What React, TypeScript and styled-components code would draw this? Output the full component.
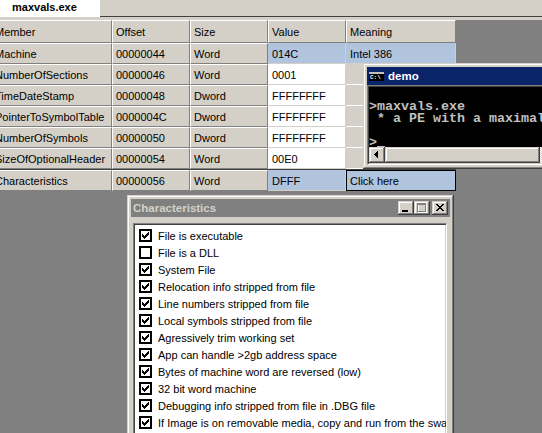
import React from 'react';
import styled, { createGlobalStyle, css } from 'styled-components';

const GlobalStyle = createGlobalStyle`
  html, body { margin: 0; padding: 0; background: #808080; overflow: hidden; }
  #root { width: 542px; height: 433px; }
`;

const UI = `"Liberation Sans", Arial, sans-serif`;
const MONO = `"Liberation Mono", "DejaVu Sans Mono", monospace`;

const Screen = styled.div`
  position: relative;
  width: 542px;
  height: 433px;
  overflow: hidden;
  background: #808080;
  display: flex;
  flex-direction: column;
  font-family: ${UI};
  font-size: 11px;
  color: #000;
`;

const TabBar = styled.div`
  height: 17px;
  flex: none;
  display: flex;
  background: #d4d0c8;
`;

const Tab = styled.div`
  width: 100px;
  background: #fff;
  font-weight: bold;
  padding-left: 12px;
  box-sizing: border-box;
  line-height: 15px;
`;

const TabRest = styled.div`
  flex: 1;
  border-bottom: 1px solid #404040;
`;

const Strip = styled.div`
  height: 3px;
  flex: none;
  background: #d4d0c8;
`;

const Workspace = styled.div`
  flex: 1;
  background: #808080;
`;

const GridClip = styled.div`
  width: 456px;
  overflow: hidden;
`;

const GridInner = styled.div`
  margin-left: -9px;
  display: flex;
  flex-direction: column;
`;

const Row = styled.div<{ $h: number; $sep?: boolean }>`
  display: grid;
  grid-template-columns: 121px 78px 78px 78px 110px;
  height: ${(p) => p.$h}px;
  ${(p) =>
    p.$sep &&
    css`
      border-top: 1px solid #404040;
    `}
`;

type Tone = 'raised' | 'white' | 'blue' | 'meaning' | 'edit';

const toneStyles: Record<Tone, ReturnType<typeof css>> = {
  raised: css`
    background: #d4d0c8;
    border-top: 1px solid #fff;
    border-left: 1px solid #fff;
    border-right: 1px solid #808080;
    border-bottom: 1px solid #808080;
  `,
  white: css`
    background: #fff;
    border-top: 1px solid #fff;
    border-left: 1px solid #fff;
    border-right: 1px solid #d4d0c8;
    border-bottom: 1px solid #d4d0c8;
  `,
  blue: css`
    background: #b0c4de;
    border-top: 1px solid #b0c4de;
    border-left: 1px solid #b0c4de;
    border-right: 1px solid #d4d0c8;
    border-bottom: 1px solid #d4d0c8;
  `,
  meaning: css`
    background: #d4d0c8;
    border-top: 1px solid #d4d0c8;
    border-left: 1px solid #d4d0c8;
    border-right: 1px solid #fff;
    border-bottom: 1px solid #fff;
  `,
  edit: css`
    background: #b0c4de;
    border: 1px solid #000;
  `,
};

const Cell = styled.div<{ $tone: Tone }>`
  box-sizing: border-box;
  display: flex;
  align-items: center;
  padding-left: 3px;
  white-space: nowrap;
  overflow: hidden;
  ${(p) => toneStyles[p.$tone]}
`;

/* ---------- windows ---------- */

const frame = css`
  position: absolute;
  box-sizing: border-box;
  background: #d4d0c8;
  padding: 4px;
  display: flex;
  flex-direction: column;
  box-shadow: inset -1px -1px #404040, inset 1px 1px #d4d0c8, inset -2px -2px #808080, inset 2px 2px #fff;
`;

const ConsoleWindow = styled.div`
  ${frame}
  left: 363px;
  top: 63px;
  width: 640px;
  height: 106px;
  z-index: 2;
`;

const TitleBar = styled.div<{ $active?: boolean }>`
  height: 18px;
  flex: none;
  display: flex;
  align-items: center;
  gap: 4px;
  padding: 0 2px 0 2px;
  font-weight: bold;
  font-size: 11.5px;
  color: ${(p) => (p.$active ? '#fff' : '#d4d0c8')};
  background: ${(p) => (p.$active ? 'linear-gradient(90deg, #0a246a 0%, #0a246a 40%, #a6caf0 100%)' : '#808080')};
`;

const TitleText = styled.span`
  flex: 1;
  white-space: nowrap;
`;

const ConIcon = styled.span`
  width: 15px;
  height: 9px;
  box-sizing: border-box;
  background: #000;
  border-top: 2px solid #c0c0c0;
  color: #fff;
  font-family: ${MONO};
  font-size: 6px;
  font-weight: bold;
  line-height: 7px;
  padding-left: 1px;
  overflow: hidden;
  flex: none;
`;

const ConsoleClient = styled.div`
  flex: 1;
  display: flex;
  flex-direction: column;
  border-top: 1px solid #808080;
  border-left: 1px solid #808080;
  border-right: 1px solid #fff;
  border-bottom: 1px solid #fff;
  box-shadow: inset 1px 1px #404040;
  padding: 1px 0 0 1px;
`;

const ConsoleText = styled.pre`
  margin: 0;
  height: 60px;
  box-sizing: border-box;
  padding: 2px 0 0 0;
  flex: none;
  background: #000;
  color: #c0c0c0;
  font-family: ${MONO};
  font-weight: bold;
  font-size: 13.33px;
  line-height: 12px;
  overflow: hidden;
`;

const Cursor = styled.span`
  display: inline-block;
  width: 8px;
  height: 12px;
  vertical-align: top;
  box-shadow: inset 0 -3px #c0c0c0;
`;

const HScroll = styled.div`
  height: 16px;
  flex: none;
  display: flex;
  background-color: #fff;
  background-image: conic-gradient(#fff 25%, #d4d0c8 0 50%, #fff 0 75%, #d4d0c8 0);
  background-size: 2px 2px;
`;

const raised = css`
  background: #d4d0c8;
  box-shadow: inset -1px -1px #404040, inset 1px 1px #d4d0c8, inset -2px -2px #808080, inset 2px 2px #fff;
`;

const ScrollBtn = styled.div`
  width: 16px;
  height: 16px;
  flex: none;
  ${raised}
  display: flex;
  align-items: center;
  justify-content: center;
`;

const Thumb = styled.div`
  width: 155px;
  height: 16px;
  flex: none;
  ${raised}
`;

const Dialog = styled.div`
  ${frame}
  left: 127px;
  top: 195px;
  width: 327px;
  height: 270px;
  z-index: 3;
`;

const CaptionButtons = styled.div`
  display: flex;
  align-items: center;
`;

const CapBtn = styled.div<{ $gap?: boolean }>`
  width: 16px;
  height: 14px;
  margin-left: ${(p) => (p.$gap ? '2px' : '0')};
  ${raised}
  display: flex;
`;

const DialogBody = styled.div`
  flex: 1;
  padding: 6px 3px 0 2px;
  display: flex;
  flex-direction: column;
`;

const ListBox = styled.div`
  flex: 1;
  background: #fff;
  border-top: 1px solid #808080;
  border-left: 1px solid #808080;
  border-right: 1px solid #fff;
  border-bottom: 1px solid #fff;
  box-shadow: inset 1px 1px #404040, inset -1px -1px #d4d0c8;
  padding: 3px 0 0 5px;
  overflow: hidden;
`;

const Item = styled.div`
  height: 17px;
  display: flex;
  align-items: center;
  gap: 6px;
  white-space: nowrap;
`;

const Box = styled.span`
  width: 13px;
  height: 13px;
  box-sizing: border-box;
  border: 2px solid #000;
  background: #fff;
  flex: none;
  display: flex;
  align-items: center;
  justify-content: center;
`;

const CheckMark = () => (
  <svg width="7" height="7" viewBox="0 0 7 7" shapeRendering="crispEdges">
    <path
      d="M0 2h1v3h-1zM1 3h1v3h-1zM2 4h1v3h-1zM3 3h1v3h-1zM4 2h1v3h-1zM5 1h1v3h-1zM6 0h1v3h-1z"
      fill="#000"
    />
  </svg>
);

const rows = [
  { m: 'Machine', o: '00000044', s: 'Word', v: '014C', mean: 'Intel 386', hi: true },
  { m: 'NumberOfSections', o: '00000046', s: 'Word', v: '0001', mean: '' },
  { m: 'TimeDateStamp', o: '00000048', s: 'Dword', v: 'FFFFFFFF', mean: '' },
  { m: 'PointerToSymbolTable', o: '0000004C', s: 'Dword', v: 'FFFFFFFF', mean: '' },
  { m: 'NumberOfSymbols', o: '00000050', s: 'Dword', v: 'FFFFFFFF', mean: '' },
  { m: 'SizeOfOptionalHeader', o: '00000054', s: 'Word', v: '00E0', mean: '' },
];

const flags: [string, boolean][] = [
  ['File is executable', true],
  ['File is a DLL', false],
  ['System File', true],
  ['Relocation info stripped from file', true],
  ['Line numbers stripped from file', true],
  ['Local symbols stripped from file', true],
  ['Agressively trim working set', true],
  ['App can handle >2gb address space', true],
  ['Bytes of machine word are reversed (low)', true],
  ['32 bit word machine', true],
  ['Debugging info stripped from file in .DBG file', true],
  ['If Image is on removable media, copy and run from the swap file', true],
  ['If Image is on Net, copy and run from the swap file', true],
  ['System File', true],
];

export default function App() {
  return (
    <>
      <GlobalStyle />
      <Screen>
        <TabBar>
          <Tab>maxvals.exe</Tab>
          <TabRest />
        </TabBar>
        <Strip />
        <Workspace>
          <GridClip>
            <GridInner>
              <Row $h={23}>
                <Cell $tone="raised">Member</Cell>
                <Cell $tone="raised">Offset</Cell>
                <Cell $tone="raised">Size</Cell>
                <Cell $tone="raised">Value</Cell>
                <Cell $tone="raised">Meaning</Cell>
              </Row>
              {rows.map((r) => (
                <Row $h={21} key={r.m}>
                  <Cell $tone="raised">{r.m}</Cell>
                  <Cell $tone="raised">{r.o}</Cell>
                  <Cell $tone="raised">{r.s}</Cell>
                  <Cell $tone={r.hi ? 'blue' : 'white'}>{r.v}</Cell>
                  <Cell $tone={r.hi ? 'blue' : 'meaning'}>{r.mean}</Cell>
                </Row>
              ))}
              <Row $h={21} $sep>
                <Cell $tone="raised">Characteristics</Cell>
                <Cell $tone="raised">00000056</Cell>
                <Cell $tone="raised">Word</Cell>
                <Cell $tone="blue">DFFF</Cell>
                <Cell $tone="edit">Click here</Cell>
              </Row>
            </GridInner>
          </GridClip>
        </Workspace>

        <ConsoleWindow>
          <TitleBar $active>
            <ConIcon>C:\</ConIcon>
            <TitleText>demo</TitleText>
          </TitleBar>
          <ConsoleClient>
            <ConsoleText>
              {'\n>maxvals.exe\n * a PE with a maximal number of sections\n\n>'}
              <Cursor />
            </ConsoleText>
            <HScroll>
              <ScrollBtn>
                <svg width="16" height="16" viewBox="0 0 16 16" shapeRendering="crispEdges">
                  <path d="M5 7h1v1h-1zM6 6h1v3h-1zM7 5h1v5h-1zM8 4h1v7h-1z" fill="#000" />
                </svg>
              </ScrollBtn>
              <Thumb />
            </HScroll>
          </ConsoleClient>
        </ConsoleWindow>

        <Dialog>
          <TitleBar>
            <TitleText>Characteristics</TitleText>
            <CaptionButtons>
              <CapBtn>
                <svg width="16" height="14" viewBox="0 0 16 14" shapeRendering="crispEdges">
                  <rect x="4" y="9" width="6" height="2" fill="#000" />
                </svg>
              </CapBtn>
              <CapBtn>
                <svg width="16" height="14" viewBox="0 0 16 14" shapeRendering="crispEdges">
                  <path d="M4 3h9v1h-9zM4 4h1v8h-1zM12 4h1v8h-1zM4 11h9v1h-9z" fill="#fff" />
                  <path d="M3 2h9v2h-9zM3 4h1v7h-1zM11 4h1v7h-1zM3 10h9v1h-9z" fill="#808080" />
                </svg>
              </CapBtn>
              <CapBtn $gap>
                <svg width="16" height="14" viewBox="0 0 16 14" shapeRendering="crispEdges">
                  <path
                    d="M4 3h2v1h-2zM10 3h2v1h-2zM5 4h2v1h-2zM9 4h2v1h-2zM6 5h4v1h-4zM7 6h2v1h-2zM6 7h4v1h-4zM5 8h2v1h-2zM9 8h2v1h-2zM4 9h2v1h-2zM10 9h2v1h-2z"
                    fill="#000"
                  />
                </svg>
              </CapBtn>
            </CaptionButtons>
          </TitleBar>
          <DialogBody>
            <ListBox>
              {flags.map(([label, on], i) => (
                <Item key={i}>
                  <Box>{on && <CheckMark />}</Box>
                  <span>{label}</span>
                </Item>
              ))}
            </ListBox>
          </DialogBody>
        </Dialog>
      </Screen>
    </>
  );
}
